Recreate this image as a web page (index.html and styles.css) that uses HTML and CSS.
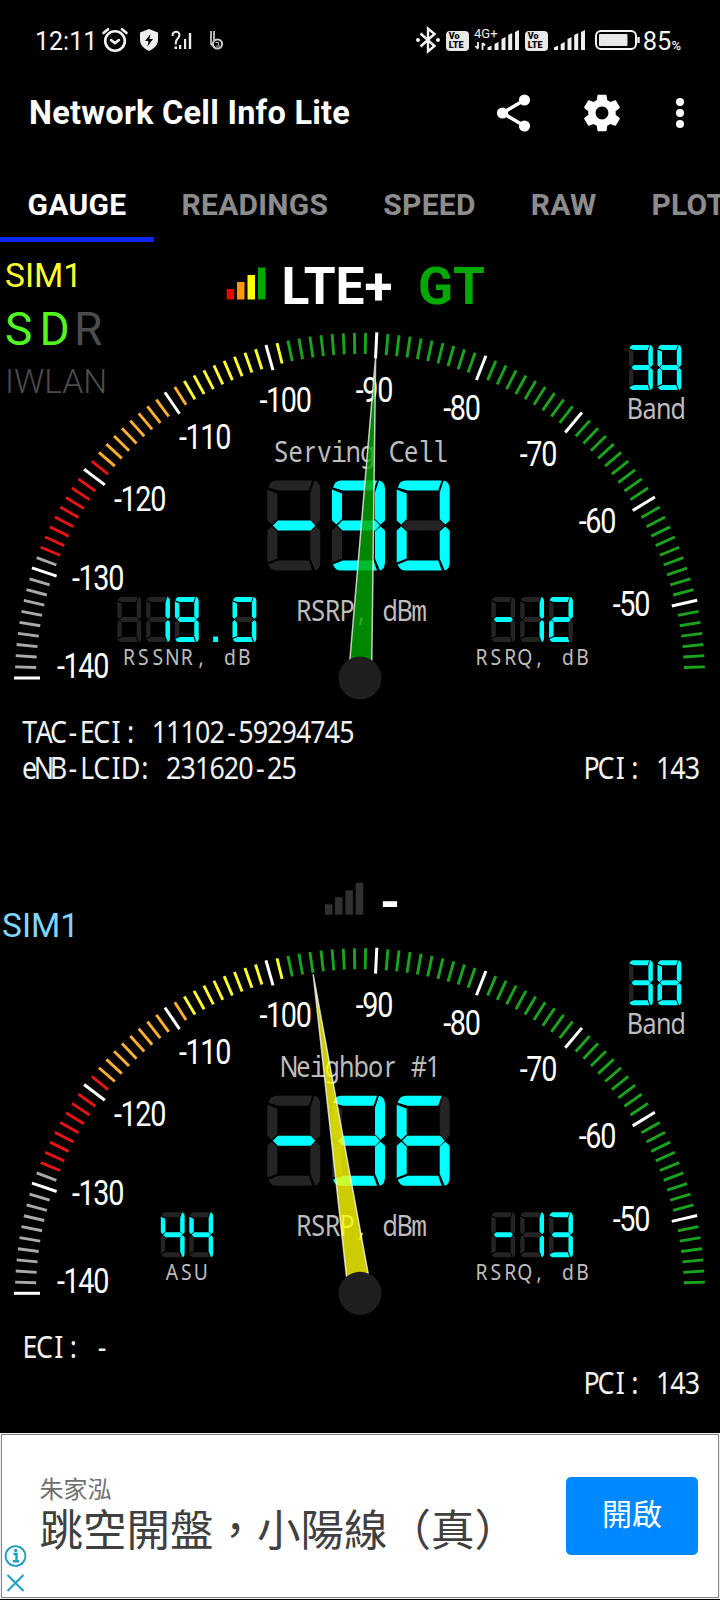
FILE: index.html
```
<!DOCTYPE html>
<html lang="en">
<head>
<meta charset="utf-8">
<title>Network Cell Info Lite</title>
<link rel="stylesheet" href="styles.css">
</head>
<body>
<div class="screen">
  <header class="status">
    <span class="clock">12:11</span>
    <svg class="ic alarm" width="28" height="30" viewBox="0 0 28 30"><g fill="none" stroke="#f4f4f4" stroke-width="2.600" stroke-linecap="round"><circle cx="14" cy="16" r="9.800"/><path d="M10 15l4 3 4-3M2.500 8l4.500-3.800M25.500 8l-4.500-3.800"/></g></svg>
    <svg class="ic shield" width="20" height="30" viewBox="0 0 20 30"><path d="M10 4l9 3.500v7.500c0 5-4 8.500-9 11-5-2.500-9-6-9-11V7.500z" fill="#eee"/><path d="M11.500 9L6 16h3.500l-1 5.500L14 14h-3.500z" fill="#000"/></svg>
    <svg class="ic unk" width="22" height="30" viewBox="0 0 22 30"><path d="M1.500 11c0-5.500 7-5.500 7-1 0 3.500-3.700 3.500-3.700 7.500v2" fill="none" stroke="#eee" stroke-width="2"/><path d="M3.500 21.500h2.500v2.500h-2.500zM8 20h2.200v4H8zM13 14h2.200v10H13zM17.800 8h2.400v16h-2.400z" fill="#eee"/></svg>
    <svg class="ic bee" width="16" height="30" viewBox="0 0 16 30"><path d="M2 6v13l4 4M5 6v9" fill="none" stroke="#ddd" stroke-width="1.600"/><circle cx="8.500" cy="19" r="4.600" fill="none" stroke="#ccc" stroke-width="2"/><path d="M6.500 17.500h3v3M7 21h4" fill="none" stroke="#bbb"/></svg>
    <span class="grow"></span>
    <svg class="ic bt" width="26" height="30" viewBox="0 0 26 30"><path d="M5.500 8.500L19.500 21l-6.500 5.500V3.500l6.500 5.500L5.500 21.500" fill="none" stroke="#f4f4f4" stroke-width="2.400"/><circle cx="3" cy="15" r="2" fill="#f4f4f4"/><circle cx="23" cy="15" r="2" fill="#f4f4f4"/></svg>
    <span class="volte"><b>Vo</b><b>LTE</b></span>
    <svg class="ic sig4" width="46" height="30" viewBox="0 0 46 30"><text x="0" y="13" class="tiny">4G+</text><path d="M13.500 25v-2.500l4-2V25zM20.500 25v-6l4-2v8zM27.500 25V14l4-2v13zM34.200 25V10l4-2v17zM41 25V7l4-2v20z" fill="#eee"/><path d="M4 17v6M1.500 21l2.500 3M8.500 25v-7M8.500 18l2.500 2.500" stroke="#eee" stroke-width="1.800" fill="none"/></svg>
    <span class="volte second"><b>Vo</b><b>LTE</b></span>
    <svg class="ic sig" width="34" height="30" viewBox="0 0 34 30"><path d="M1 25v-2.500l4-2V25zM7.700 25v-6l4-2v8zM14.500 25V14l4-2v13zM21.200 25V10l4-2v17zM28 25V7l4-2v20z" fill="#eee"/></svg>
    <svg class="ic batt" width="48" height="30" viewBox="0 0 48 30"><rect x="2" y="6" width="40" height="18" rx="5" fill="none" stroke="#f4f4f4" stroke-width="2"/><rect x="5" y="9" width="28.500" height="12" rx="1" fill="#e8e8e8"/><path d="M44.500 12v6" stroke="#eee" stroke-width="2.400"/></svg>
    <span class="pct">85<small>%</small></span>
  </header>

  <div class="toolbar">
    <h1>Network Cell Info Lite</h1>
    <svg class="share" width="36" height="40" viewBox="0 0 36 40"><path d="M28.500 7L6.500 20l22 13" fill="none" stroke="#fff" stroke-width="3.600"/><circle cx="28.500" cy="7" r="5.600" fill="#fff"/><circle cx="6.500" cy="20" r="5.600" fill="#fff"/><circle cx="28.500" cy="33" r="5.600" fill="#fff"/></svg>
    <svg class="gear" width="44" height="44" viewBox="0 0 24 24"><path fill="#fff" d="M19.430 12.980c.04-.32.07-.64.07-.98s-.03-.66-.07-.98l2.110-1.650c.19-.15.24-.42.12-.64l-2-3.460c-.12-.22-.39-.3-.61-.22l-2.490 1c-.52-.4-1.080-.73-1.690-.98l-.38-2.650C14.460 2.180 14.250 2 14 2h-4c-.25 0-.46.18-.49.42l-.38 2.650c-.61.25-1.170.59-1.690.98l-2.490-1c-.23-.09-.49 0-.61.22l-2 3.460c-.13.22-.07.49.12.64l2.110 1.650c-.04.32-.07.65-.07.98s.03.66.07.98l-2.110 1.650c-.19.15-.24.42-.12.64l2 3.460c.12.22.39.3.61.22l2.490-1c.52.4 1.080.73 1.690.98l.38 2.650c.03.24.24.42.49.42h4c.25 0 .46-.18.49-.42l.38-2.650c.61-.25 1.170-.59 1.690-.98l2.490 1c.23.09.49 0 .61-.22l2-3.460c.12-.22.07-.49-.12-.64l-2.110-1.650zM12 15.500c-1.930 0-3.500-1.570-3.500-3.500s1.570-3.500 3.500-3.500 3.500 1.570 3.500 3.500-1.570 3.500-3.500 3.500z"/></svg>
    <svg class="more" width="10" height="32" viewBox="0 0 10 32"><g fill="#fff"><circle cx="5" cy="5" r="4"/><circle cx="5" cy="16" r="4"/><circle cx="5" cy="27" r="4"/></g></svg>
  </div>

  <nav class="tabs">
    <span class="tab active">GAUGE</span><span class="tab">READINGS</span><span class="tab">SPEED</span><span class="tab">RAW</span><span class="tab">PLOT</span>
  </nav>

  <section class="cell">
    <svg class="gauge" data-needle="50" data-color="#00a800" width="720" height="615" viewBox="0 242 720 615">
      <g class="title">
        <path fill="#f00000" d="M226.700 289h7.500v10.500h-7.500z"/><path fill="#ff9800" d="M237 282h7.500v17.500H237z"/><path fill="#ffff00" d="M247.500 275h7.500v24.500h-7.500z"/><path fill="#00a800" d="M258 267.500h7.500v32H258z"/>
        <text x="281.500" y="304">LTE+</text><text x="418" y="304" class="gt">GT</text>
      </g>
      <g class="face"></g>
      <text class="mono" data-x="281.2" y="462">Serv<tspan class="slab">i</tspan>ng Ce<tspan class="slab">ll</tspan></text>
      <text class="mono" data-x="303.8" y="620.800">RSRP, dB<tspan class="slab">m</tspan></text>
      <text class="mono" data-x="635" y="418.800">Band</text>
      <text class="mono small" data-x="129" y="665">RSSNR, dB</text>
      <text class="mono small" data-x="481.5" y="665">RSRQ, dB</text>
      <g class="lcd" data-at="267.3 480.5 1 1 64.7" data-value="-90"></g>
      <g class="lcd" data-at="629 345 .45 .5 28.5" data-value="38"></g>
      <g class="lcd" data-at="117.3 597 .45 .5 28.8" data-value=" 19.0"></g>
      <g class="lcd" data-at="491.3 597 .45 .5 28.9" data-value="-12"></g>
      <text class="mono info" data-x="29.6" y="742.8">TAC-ECI: 11102-59294745</text>
      <text class="mono info" data-x="29.6" y="778.800">eNB-LCID: 231620-25</text>
      <text class="mono info" data-x="591.5" y="778.800">PCI: 143</text>
      <g class="hand"></g>
    </svg>
    <div class="sim">
      <div class="name">SIM1</div>
      <div class="sdr"><span>S</span><span>D</span><span class="off">R</span></div>
      <div class="iwlan">IWLAN</div>
    </div>
  </section>

  <section class="cell neighbor">
    <svg class="gauge" data-needle="44" data-color="#ffff00" width="720" height="576" viewBox="0 241.7 720 576">
      <g class="title">
        <path fill="#303030" d="M325 289h7.500v10.500H325zM335 282h7.500v17.500H335zM345.400 275h7.500v24.500h-7.500zM355.700 267.500h7.500v32h-7.500z"/>
        <text x="380" y="305">-</text>
      </g>
      <g class="face"></g>
      <text class="mono" data-x="289" y="462">Ne<tspan class="slab">i</tspan>ghbor #1</text>
      <text class="mono" data-x="303.8" y="620.5">RSRP, dB<tspan class="slab">m</tspan></text>
      <text class="mono" data-x="635" y="418.5">Band</text>
      <text class="mono small" data-x="172" y="665">ASU</text>
      <text class="mono small" data-x="481.5" y="665">RSRQ, dB</text>
      <g class="lcd" data-at="267.3 480.5 1 1 64.7" data-value="-36"></g>
      <g class="lcd" data-at="629 345 .45 .5 28.5" data-value="38"></g>
      <g class="lcd" data-at="160.800 597 .45 .5 28.5" data-value="44"></g>
      <g class="lcd" data-at="491.3 597 .45 .5 28.9" data-value="-13"></g>
      <text class="mono info" data-x="30" y="742.5">ECI: -</text>
      <text class="mono info" data-x="591.5" y="778.500">PCI: 143</text>
      <g class="hand"></g>
    </svg>
    <div class="sim"><div class="name">SIM1</div></div>
  </section>

  <footer class="ad">
    <div class="marks">
      <svg width="24" height="24" viewBox="0 0 24 24"><circle cx="12.500" cy="12" r="9.900" fill="none" stroke="#1a9fc4" stroke-width="1.800"/><path d="M10.500 10h3v7M10 17.200h6" fill="none" stroke="#1a9fc4" stroke-width="2.400"/><circle cx="12.700" cy="6.500" r="1.700" fill="#1a9fc4"/></svg>
      <svg width="24" height="24" viewBox="0 0 24 24"><path d="M4.500 4l16 16M20.500 4l-16 16" stroke="#1a9fc4" stroke-width="2"/></svg>
    </div>
    <div class="copy"><div class="who">朱家泓</div><div class="what">跳空開盤，小陽線（真）</div></div>
    <div class="open">開啟</div>
  </footer>
</div>
<script src="gauge.js"></script>
</body>
</html>
```
FILE: styles.css
```
body { margin: 0; background: #000; }
.screen { width: 720px; height: 1600px; overflow: hidden; background: #000; color: #fff; font-family: Roboto, sans-serif; display: flex; flex-direction: column; }
.screen svg { display: block; flex: none; }

.status { height: 80px; box-sizing: border-box; padding: 25px 39px 0 35px; display: flex; align-items: flex-start; flex: none; }
.clock { width: 61px; font-size: 25px; line-height: 33px; color: #f4f4f4; white-space: nowrap; }
.alarm { margin-left: 5px; }
.shield { margin-left: 10px; }
.unk { margin-left: 12px; }
.bee { margin-left: 16px; }
.grow { flex: 1; }
.volte { width: 23px; height: 20px; margin: 5.500px 0 0 5px; border-radius: 4px; background: #e8e8e8; color: #000; font: 900 9px/9px Roboto, sans-serif; display: flex; flex-direction: column; padding-top: 1px; box-sizing: border-box; padding-left: 3px; }
.sig4 { margin-left: 5px; }
.sig { margin-left: 5px; }
.batt { margin-left: 7px; }
.tiny { font: 13px Roboto, sans-serif; fill: #eee; }
.pct { font-size: 25.500px; line-height: 33px; margin-left: 1px; color: #f4f4f4; white-space: nowrap; }
.pct small { font-size: 13px; font-weight: 500; }

.toolbar { height: 66px; flex: none; display: flex; align-items: center; padding: 0 35px 0 29px; }
.toolbar h1 { flex: 1; margin: -1px 0 0; font-size: 32.500px; font-weight: 700; white-space: nowrap; letter-spacing: .25px; }
.gear { margin-left: 48px; }
.more { margin-left: 51px; }

.tabs { height: 96px; box-sizing: border-box; padding-top: 33px; flex: none; display: flex; }
.tab { flex: none; box-sizing: border-box; height: 63px; padding: 8px 27.500px 0 27.500px; font-size: 30px; letter-spacing: .27px; line-height: 35px; font-weight: 700; color: #8c8c8c; }
.tab.active { width: 154px; color: #fff; border-bottom: 5px solid #0c28f0; }

.cell { position: relative; height: 615px; flex: none; }
.neighbor { height: 576px; }
.title text { font: 700 51.500px Roboto, sans-serif; fill: #fff; }
.title .gt { fill: #00a800; }
.scale { font: 36px Roboto, sans-serif; letter-spacing: -1.700px; fill: #fff; text-anchor: end; }
.mono { font: 28.500px "Noto Sans", sans-serif; fill: #bdbdbd; text-anchor: middle; }
.mono.small { font-size: 21px; }
.mono.info { font-size: 30.500px; fill: #f2f2f2; }
.slab { font-family: "Liberation Mono", monospace; font-size: 30px; }

.sim { position: absolute; left: 5px; top: 14px; }
.name { font-size: 33.500px; line-height: 40px; color: #ffff30; }
.sdr { margin-top: 6px; display: flex; font-size: 46px; line-height: 54px; color: #50f820; }
.sdr span { width: 34.500px; }
.sdr .off, .iwlan { color: #4c4c4c; }
.iwlan { margin-top: 6px; font-size: 33.700px; line-height: 40px; font-weight: 300; }
.neighbor .sim { left: 2px; top: 49px; }
.neighbor .name { color: #80d4ff; }

.ad { height: 166px; box-sizing: border-box; margin: 0 0 1px; border: 2px solid #858585; outline: 1px solid #eee; outline-offset: -1px; background: #fff; display: flex; flex: none; font-family: "Noto Sans CJK TC", sans-serif; }
.marks { width: 37.500px; flex: none; display: flex; flex-direction: column; gap: 3px; padding-top: 109px; padding-left: 1px; box-sizing: border-box; }
.copy { flex: 1; padding-top: 36px; white-space: nowrap; }
.who { font-size: 24px; line-height: 34px; color: #707070; font-weight: 400; }
.what { font-size: 43.500px; line-height: 46px; color: #404040; font-weight: 400; }
.open { width: 132px; height: 78px; flex: none; margin: 42px 20px 0 0; border-radius: 5px; background: #0088ff; color: #fff; font-size: 30px; line-height: 71px; text-align: center; }
```
FILE: gauge.js
```
const NS = 'http://www.w3.org/2000/svg';
const CX = 360, CY = 678, STEP = 180 / 97;

function add(parent, tag, attrs, text) {
  const el = document.createElementNS(NS, tag);
  for (const k in attrs) el.setAttribute(k, attrs[k]);
  if (text) el.textContent = text;
  parent.appendChild(el);
  return el;
}

function point(i, r) {
  const a = i * STEP * Math.PI / 180;
  return [CX - r * Math.cos(a), CY - r * Math.sin(a)];
}

// Dial labels: right edge and baseline of each value.
const labels = [
  ['-140', 108, 678], ['-130', 123, 589.5], ['-120', 165, 510.5], ['-110', 230, 449], ['-100', 310.5, 411.5],
  ['-90', 392, 401.5], ['-80', 479.5, 420], ['-70', 556, 465.5], ['-60', 615, 532.5], ['-50', 649, 616]
];

function tickColor(i) {
  if (i % 10 === 0) return '#fff';
  if (i < 12) return '#aaa';
  if (i < 22) return '#e81414';
  if (i < 32) return '#ffb02c';
  if (i < 42) return '#ffff30';
  return '#1aa41e';
}

document.querySelectorAll('.face').forEach(face => {
  for (let i = 0; i < 97; i++) {
    const major = i % 10 === 0;
    const [x1, y1] = point(i, major ? 346 : 345);
    const [x2, y2] = point(i, major ? 320 : 324);
    add(face, 'line', { x1, y1, x2, y2, stroke: tickColor(i), 'stroke-width': major ? 3 : 2.9 });
  }
  labels.forEach(([t, x, y]) => add(face, 'text', { class: 'scale', transform: `translate(${x} ${y}) scale(.8 1)` }, t));
});

// Seven-segment shapes on a 53 x 90 cell.
const shapes = {
  a: 'M1 7Q3 0 9 0H45L41.500 10H11z',
  b: 'M47 0Q53 1 53 9V40L48.500 44 43 38.500V12z',
  c: 'M48.500 46L53 50V81Q53 89 48 90L43 78V51z',
  d: 'M1 84L11 80H41.500L45 90H9Q3 90 1 84z',
  e: 'M4.500 46L10 51V78L0 82V50z',
  f: 'M0 9L10 13V38.500L4.500 44 0 40z',
  g: 'M5.500 45L10.500 40H43.500L48 45 43.500 50H10.500z'
};
const lit = { '-': 'g', ' ': '', 0: 'abcdef', 1: 'bc', 2: 'abdeg', 3: 'abcdg', 4: 'bcfg', 6: 'acdefg', 8: 'abcdefg', 9: 'abcdfg' };

document.querySelectorAll('.lcd').forEach(g => {
  const [x, y, sx, sy, pitch] = g.dataset.at.split(' ').map(Number);
  [...g.dataset.value].forEach((ch, n) => {
    const cell = add(g, 'g', { transform: `translate(${x + n * pitch} ${y}) scale(${sx} ${sy})` });
    if (ch === '.') { add(cell, 'path', { d: 'M21 79h11v11H21z', fill: '#0ff' }); return; }
    for (const s in shapes) add(cell, 'path', { d: shapes[s], fill: lit[ch].includes(s) ? '#0ff' : '#242424' });
  });
});

// Fixed-pitch captions: every character is centred in its own cell.
document.querySelectorAll('.mono').forEach(t => {
  const k = t.classList.contains('small') ? .92 : .88;
  const x0 = Number(t.dataset.x);
  t.setAttribute('x', [...t.textContent].map((c, n) => ((x0 + n * 14.42) / k).toFixed(2)).join(' '));
  t.setAttribute('transform', `scale(${k} 1)`);
});

document.querySelectorAll('.gauge').forEach(svg => {
  const hand = svg.querySelector('.hand');
  const turn = Number(svg.dataset.needle) * STEP - 90;
  add(hand, 'path', { d: 'M360 356L348.400 678H371.600z', transform: `rotate(${turn} ${CX} ${CY})`, fill: svg.dataset.color, 'fill-opacity': .8, stroke: '#fff', 'stroke-opacity': .75, 'stroke-width': 1.5, 'stroke-linejoin': 'round' });
  add(hand, 'circle', { cx: CX, cy: CY, r: 21.5, fill: '#1e1e1e' });
});
```
